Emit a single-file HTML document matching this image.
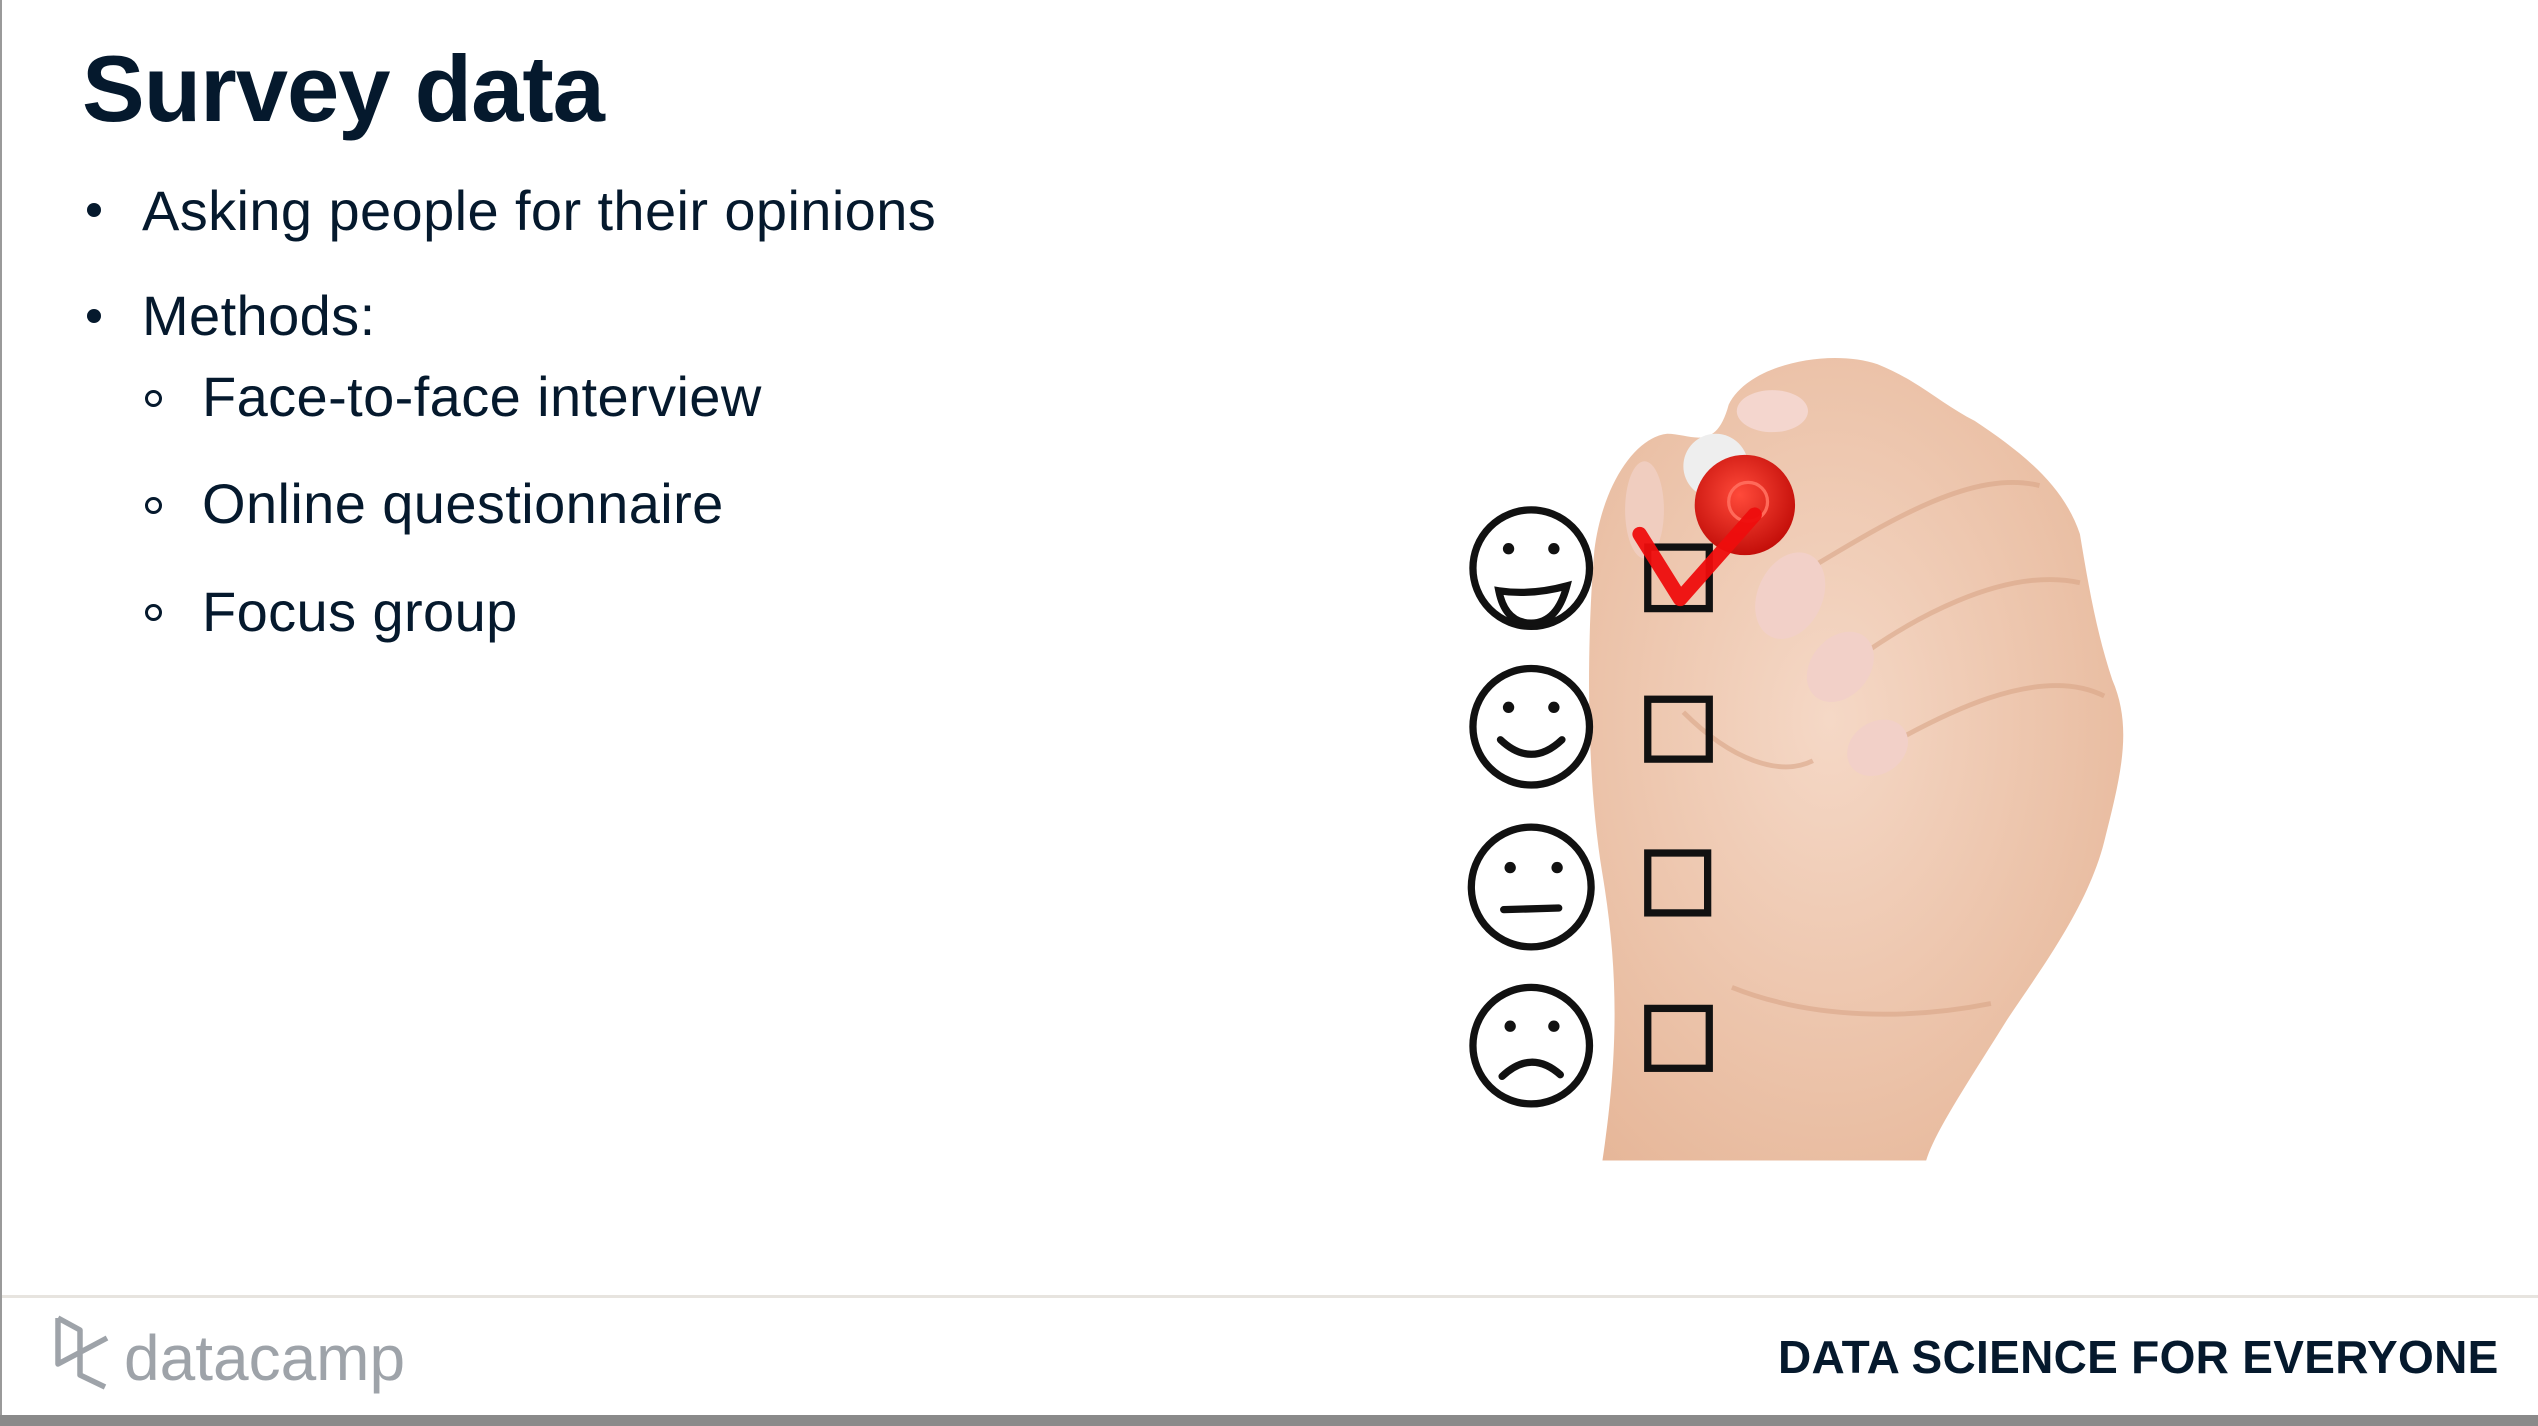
<!DOCTYPE html>
<html><head><meta charset="utf-8"><style>
html,body{margin:0;padding:0;}
body{width:2538px;height:1426px;position:relative;overflow:hidden;background:#fff;font-family:"Liberation Sans",Arial,sans-serif;color:#05192d;}
.t{position:absolute;white-space:nowrap;line-height:1;}
.b{font-size:56px;letter-spacing:0.4px}
.dot{position:absolute;width:14px;height:14px;border-radius:50%;background:#05192d;}
.ring{position:absolute;width:11px;height:11px;border-radius:50%;border:3px solid #05192d;}
</style></head><body>
<div style="position:absolute;left:0;top:0;width:2px;height:1416px;background:#9a9a9a"></div>
<div class="t" style="left:82px;top:42px;font-size:94px;font-weight:bold;letter-spacing:-1px">Survey data</div>
<div class="dot" style="left:87px;top:203px"></div>
<div class="t b" style="left:142px;top:183px">Asking people for their opinions</div>
<div class="dot" style="left:87px;top:309px"></div>
<div class="t b" style="left:142px;top:288px">Methods:</div>
<div class="ring" style="left:145px;top:390px"></div>
<div class="t b" style="left:202px;top:369px">Face-to-face interview</div>
<div class="ring" style="left:145px;top:497px"></div>
<div class="t b" style="left:202px;top:476px">Online questionnaire</div>
<div class="ring" style="left:145px;top:604px"></div>
<div class="t b" style="left:202px;top:584px">Focus group</div>

<svg style="position:absolute;left:0;top:0" width="2538" height="1426" viewBox="0 0 1568 881">
 <defs>
  <radialGradient id="sk" cx="0.45" cy="0.45" r="0.7">
   <stop offset="0" stop-color="#f5d8c6"/><stop offset="1" stop-color="#e6b698"/>
  </radialGradient>
  <radialGradient id="rd" cx="0.45" cy="0.4" r="0.6">
   <stop offset="0" stop-color="#ff4a3a"/><stop offset="1" stop-color="#c40f0a"/>
  </radialGradient>
 </defs>
 <path d="M990,717 C1000,650 1000,600 990,540 C980,480 980,400 985,340 C990,300 1010,270 1030,268 C1045,268 1060,280 1068,250 C1080,225 1130,215 1160,225 C1185,235 1200,250 1220,260 C1250,280 1275,300 1285,330 C1290,360 1295,390 1305,420 C1318,450 1310,480 1300,520 C1290,560 1260,600 1240,630 C1215,670 1195,700 1190,717 Z" fill="url(#sk)"/>
 <path d="M1120,350 C1170,320 1220,290 1260,300 M1130,420 C1180,380 1240,350 1285,360 M1150,470 C1200,440 1260,410 1300,430 M1040,440 C1070,470 1100,480 1120,470 M1070,610 C1120,630 1180,630 1230,620" stroke="#d9a587" stroke-width="3" fill="none" opacity="0.6"/>
 <ellipse cx="1095" cy="254" rx="22" ry="13" fill="#f4d6ce"/>
 <ellipse cx="1106" cy="368" rx="20" ry="28" fill="#f2d0c8" transform="rotate(25 1106 368)"/>
 <ellipse cx="1137" cy="412" rx="18" ry="24" fill="#f2d0c8" transform="rotate(40 1137 412)"/>
 <ellipse cx="1160" cy="462" rx="16" ry="20" fill="#f2d0c8" transform="rotate(55 1160 462)"/>
 <ellipse cx="1016" cy="315" rx="12" ry="30" fill="#f0cdbf"/>
 <circle cx="1060" cy="288" r="20" fill="#eee"/>
 <circle cx="1078" cy="312" r="31" fill="url(#rd)"/>
 <circle cx="1080" cy="310" r="12" fill="none" stroke="#ff6a5a" stroke-width="2"/>
 <g fill="none" stroke="#111" stroke-width="4.5" stroke-linecap="round">
  <circle cx="946" cy="351" r="36"/>
  <circle cx="946" cy="449" r="36"/>
  <circle cx="946" cy="548" r="37"/>
  <circle cx="946" cy="646" r="36"/>
  <path d="M926,365 Q946,368 968,362 Q962,385 946,385 Q930,385 926,365 Z"/>
  <path d="M927,457 Q946,475 965,457"/>
  <path d="M929,562 L963,561"/>
  <path d="M928,665 Q946,648 964,664"/>
  <rect x="1018" y="338" width="38" height="38"/>
  <rect x="1018" y="432" width="38" height="37"/>
  <rect x="1018" y="527" width="37" height="37"/>
  <rect x="1018" y="623" width="38" height="37"/>
 </g>
 <g fill="#111">
  <circle cx="932" cy="339" r="3.5"/><circle cx="960" cy="339" r="3.5"/>
  <circle cx="932" cy="437" r="3.5"/><circle cx="960" cy="437" r="3.5"/>
  <circle cx="933" cy="536" r="3.5"/><circle cx="962" cy="536" r="3.5"/>
  <circle cx="933" cy="634" r="3.5"/><circle cx="960" cy="634" r="3.5"/>
 </g>
 <path d="M1013,330 L1038,370 L1084,318" fill="none" stroke="#ee0d0d" stroke-width="9" stroke-linecap="round" stroke-linejoin="round" opacity="0.95"/>
</svg>

<div style="position:absolute;left:2px;top:1295px;width:2536px;height:3px;background:#e7e4df"></div>
<svg style="position:absolute;left:50px;top:1312px" width="70" height="80" viewBox="0 0 70 80">
 <path d="M8,6 L8,52 L57,26 M8,6 L30,18 L30,63 L55,75" fill="none" stroke="#9ea3a9" stroke-width="5.5" stroke-linejoin="round"/>
</svg>
<div class="t" style="left:124px;top:1326px;font-size:64px;color:#9ea3a9;letter-spacing:0px">datacamp</div>
<div class="t" style="left:1778px;top:1334px;font-size:46px;font-weight:bold;letter-spacing:0.3px">DATA SCIENCE FOR EVERYONE</div>
<div style="position:absolute;left:0;top:1415px;width:2538px;height:11px;background:#8a8a8a"></div>
</body></html>
